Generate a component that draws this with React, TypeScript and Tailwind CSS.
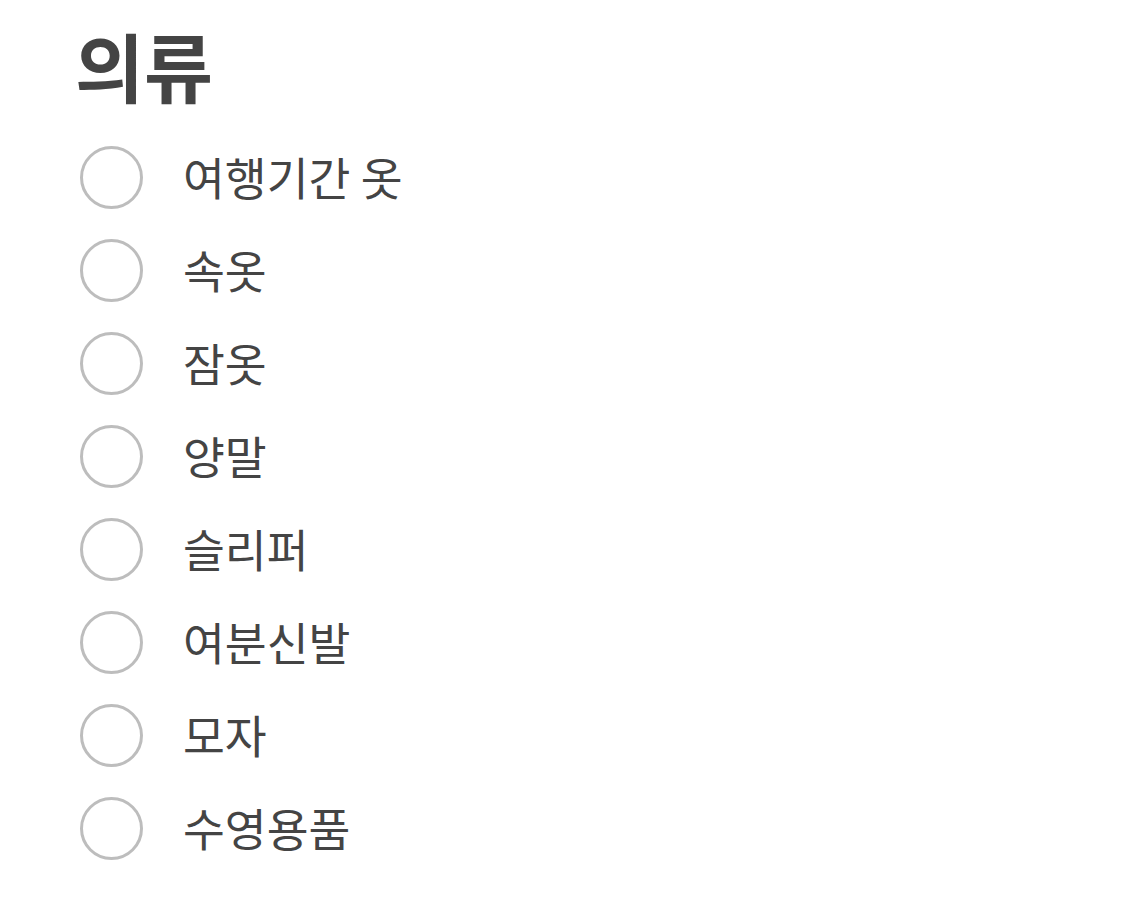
import React from "react";

const items = ["여행기간 옷", "속옷", "잠옷", "양말", "슬리퍼", "여분신발", "모자", "수영용품"];

export default function App() {
  return (
    <div
      className="w-[1141px] h-[924px] bg-white pl-[80px] pt-[27px]"
      style={{ fontFamily: '"Noto Sans CJK KR", "Noto Sans", sans-serif' }}
    >
      <h1 className="text-[75px] leading-[75px] font-bold text-[#444444] -ml-[5px]">의류</h1>
      <div className="flex flex-col mt-[29px]">
        {items.map((t) => (
          <div key={t} className="flex items-center h-[93px]">
            <div className="w-[63px] h-[63px] rounded-full border-[3px] border-[#bdbdbd] shrink-0" />
            <span className="ml-[40px] text-[45.5px] leading-none text-[#444444] -mt-[2px]">{t}</span>
          </div>
        ))}
      </div>
    </div>
  );
}
